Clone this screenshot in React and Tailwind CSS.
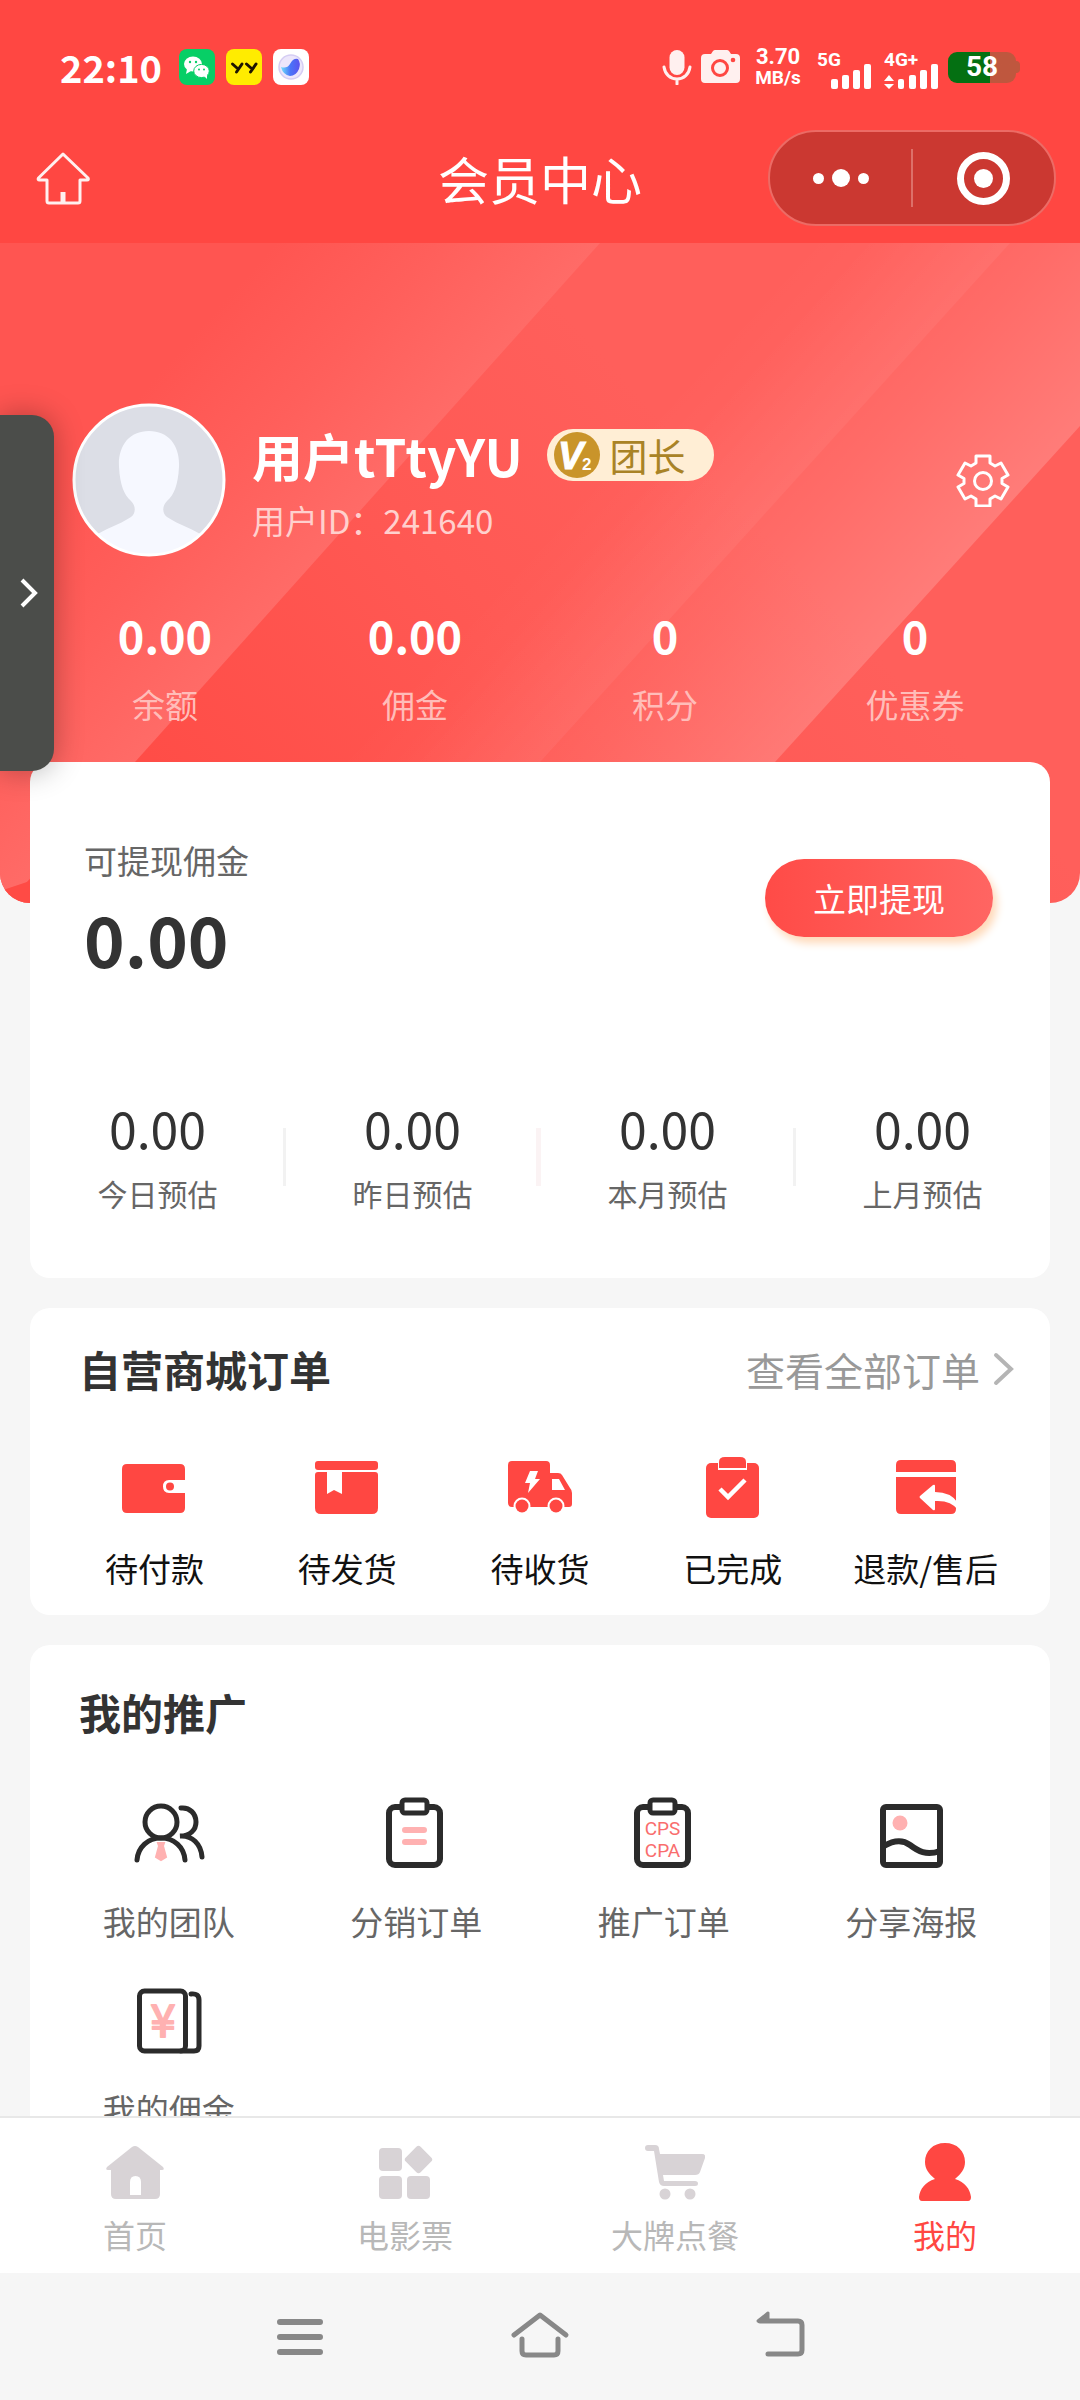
const StatusBar = () => (
  <div className="flex items-center justify-between px-[60px] pt-1 h-[130px] text-white">
    <div className="flex items-center gap-[11px]">
      <span className="text-[38px] leading-none font-bold mr-[6px]">22:10</span>
      <svg className="w-9 h-9" viewBox="0 0 36 36">
        <rect width="36" height="36" rx="8" fill="#07cf66" />
        <ellipse cx="14" cy="15" rx="9" ry="7.500" fill="#fff" />
        <path d="M8 20l-1 5 5-3z" fill="#fff" />
        <ellipse cx="22.500" cy="22" rx="7.800" ry="6.600" fill="#fff" stroke="#07cf66" strokeWidth="1" />
        <path d="M25 27l3 3 0-5z" fill="#fff" />
        <circle cx="11" cy="13" r="1.200" fill="#07cf66" />
        <circle cx="17" cy="13" r="1.200" fill="#07cf66" />
        <circle cx="20" cy="20.500" r="1" fill="#07cf66" />
        <circle cx="25" cy="20.500" r="1" fill="#07cf66" />
      </svg>
      <svg className="w-9 h-9" viewBox="0 0 36 36">
        <rect width="36" height="36" rx="8" fill="#ffec00" />
        <g fill="none" stroke="#1d1500" strokeWidth="3" strokeLinecap="round">
          <path d="M6.500 15l4.500 4M16 15l-5.500 8" />
          <path d="M20.500 15l4.500 4M30 15l-5.500 8" />
        </g>
      </svg>
      <svg className="w-9 h-9" viewBox="0 0 36 36">
        <defs>
          <linearGradient id="orb" x1="0" y1="0" x2="1" y2="0">
            <stop offset="0" stopColor="#6fe0fb" />
            <stop offset="0.500" stopColor="#4a74f8" />
            <stop offset="1" stopColor="#5b53ee" />
          </linearGradient>
        </defs>
        <rect width="36" height="36" rx="8" fill="#fff" />
        <circle cx="18" cy="18" r="12" fill="#ece6fb" stroke="#d5cdf3" strokeWidth="1.500" />
        <path d="M8 18q6 2 9-3 3-6 8-5 3 4 1 10-3 7-9 7-7-1-9-9z" fill="url(#orb)" />
      </svg>
    </div>

    <div className="flex items-center font-['Roboto',sans-serif]">
      <svg className="w-[30px] h-9" viewBox="0 0 30 36" fill="none" stroke="#fff0ef" strokeWidth="3" strokeLinecap="round">
        <rect x="7.500" y="1" width="15" height="25" rx="7.500" fill="#fff0ef" stroke="none" />
        <path d="M2 18c1 7 6 12 13 12s12-5 13-12M15 30v5" />
      </svg>
      <svg className="w-10 h-9 ml-[9px]" viewBox="0 0 40 36">
        <path fill="#fff0ef" d="M4 5h6l2-3q1-1 2-1h12q1 0 2 1l2 3h5q4 0 4 4v21q0 4-4 4H4q-4 0-4-4V9q0-4 4-4z" />
        <circle cx="19" cy="19" r="7.500" fill="none" stroke="#ff4742" strokeWidth="3" />
        <circle cx="32" cy="11" r="2.300" fill="#ff4742" />
      </svg>
      <div className="ml-[13px] flex w-[48px] flex-col items-center font-bold">
        <span className="text-[22px] leading-[22px]">3.70</span>
        <span className="text-[19px] leading-[20px]">MB/s</span>
      </div>
      <svg className="w-[56px] h-[46px] ml-[15px]" viewBox="0 -8 56 46" fill="#fff">
        <text x="0" y="14" fontSize="19" fontWeight="700">5G</text>
        <rect x="14" y="27" width="7" height="10" rx="2" />
        <rect x="25" y="23" width="7" height="14" rx="2" />
        <rect x="36" y="18" width="7" height="19" rx="2" />
        <rect x="47" y="12" width="7" height="25" rx="2" />
      </svg>
      <svg className="w-[56px] h-[46px] ml-[11px]" viewBox="0 -8 56 46" fill="#fff">
        <text x="0" y="14" fontSize="19" fontWeight="700">4G+</text>
        <path d="M5 23l5 6H0zM5 37l5-5H0z" />
        <rect x="14" y="27" width="6" height="10" rx="2" />
        <rect x="25" y="23" width="7" height="14" rx="2" />
        <rect x="36" y="18" width="7" height="19" rx="2" />
        <rect x="47" y="12" width="7" height="25" rx="2" />
      </svg>
      <div className="ml-[8px] flex h-[31px] w-[68px] items-center justify-center rounded-[9px] bg-linear-to-r from-[#047012] from-62% to-[#bf573e] to-62% text-[28px] leading-none font-bold">
        58
      </div>
      <span className="h-3 w-1 rounded-r bg-[#bf573e]" />
    </div>
  </div>
);

const Header = () => (
  <header className="grid grid-cols-3 items-center pb-[17px] px-6 text-white">
    <button aria-label="首页" className="ml-[12px] justify-self-start">
      <svg className="w-[54px] h-[54px]" viewBox="0 0 54 54" fill="none" stroke="#fff0ef" strokeWidth="3" strokeLinejoin="round">
        <path d="M27 3L2.500 27q-1 2 1 2H11v21q0 2 2 2h29q2 0 2-2V29h7q2 0 1-2z" />
        <path d="M27 41v10" strokeWidth="5" />
      </svg>
    </button>
    <h1 className="text-center text-[51px] leading-[62px]">会员中心</h1>
    <div className="justify-self-end flex h-24 w-[288px] items-center rounded-full border-2 border-[#ec6b65] bg-[#cb3831]">
      <button aria-label="更多" className="flex flex-1 items-center justify-center gap-2">
        <span className="size-[11px] rounded-full bg-white" />
        <span className="size-[18px] rounded-full bg-white" />
        <span className="size-[11px] rounded-full bg-white" />
      </button>
      <span className="h-[58px] w-[2px] bg-[#dd7069]" />
      <button aria-label="关闭" className="flex flex-1 items-center justify-center">
        <span className="flex size-[53px] items-center justify-center rounded-full border-[7px] border-white">
          <span className="size-[19px] rounded-full bg-white" />
        </span>
      </button>
    </div>
  </header>
);

const BannerArt = () => (
  <svg className="absolute inset-0 h-full w-full" viewBox="0 0 1080 660" preserveAspectRatio="none">
    <defs>
      <linearGradient id="base" gradientUnits="userSpaceOnUse" x1="150" y1="560" x2="620" y2="130">
        <stop offset="0" stopColor="#ff4c46" />
        <stop offset="0.600" stopColor="#ff5954" />
        <stop offset="1" stopColor="#ff5f5b" />
      </linearGradient>
      <linearGradient id="rayA" gradientUnits="userSpaceOnUse" x1="370" y1="257" x2="190" y2="96">
        <stop offset="0" stopColor="#ff6b67" />
        <stop offset="0.500" stopColor="#ff5f5b" />
        <stop offset="1" stopColor="#ff5551" />
      </linearGradient>
      <linearGradient id="rayB" gradientUnits="userSpaceOnUse" x1="700" y1="340" x2="590" y2="240">
        <stop offset="0" stopColor="#fff" stopOpacity="0.050" />
        <stop offset="1" stopColor="#fff" stopOpacity="0" />
      </linearGradient>
      <linearGradient id="rayC" gradientUnits="userSpaceOnUse" x1="930" y1="348" x2="720" y2="160">
        <stop offset="0" stopColor="#fff" stopOpacity="0.180" />
        <stop offset="0.500" stopColor="#fff" stopOpacity="0.080" />
        <stop offset="1" stopColor="#fff" stopOpacity="0" />
      </linearGradient>
    </defs>
    <rect width="1080" height="660" fill="url(#base)" />
    <path d="M0 0H600L135 519 8 660H0z" fill="url(#rayA)" />
    <path d="M0 648L30 638V660H0z" fill="#ff4b45" />
    <path d="M600 0H1010L540 519H135z" fill="url(#rayB)" />
    <path d="M600 0H1080V183L775 519H300z" fill="url(#rayC)" />
  </svg>
);

const accountStats = [
  { label: '余额', value: '0.00' },
  { label: '佣金', value: '0.00' },
  { label: '积分', value: '0' },
  { label: '优惠券', value: '0' },
];

const ProfileBanner = () => (
  <section className="relative overflow-hidden rounded-b-[30px] px-10 pt-40 pb-[176px] text-white">
    <BannerArt />
    <div className="relative flex items-center pl-8 pr-[30px]">
      <svg className="size-[154px] shrink-0" viewBox="0 0 154 154">
        <clipPath id="face"><circle cx="77" cy="77" r="75" /></clipPath>
        <circle cx="77" cy="77" r="75" fill="#dcdee6" />
        <g clipPath="url(#face)" fill="#f6f8ff">
          <path d="M77 28c-20 0-31 15-30 36 1 18 5 28 12 34 5 5 5 12 0 16-12 8-27 12-38 20v20h112v-20c-11-8-26-12-38-20-5-4-5-11 0-16 7-6 11-16 12-34 1-21-10-36-30-36z" />
        </g>
        <circle cx="77" cy="77" r="75" fill="none" stroke="#fff" strokeWidth="3" />
      </svg>
      <div className="ml-[26px] flex-1 pt-[6px]">
        <div className="flex items-center gap-6">
          <span className="text-[51px] leading-[64px] font-bold">用户tTtyYU</span>
          <span className="flex h-[52px] items-center gap-[10px] rounded-full bg-[#ffeed5] pl-[7px] pr-[28px] text-[38px] leading-none text-[#a98326]">
            <svg className="size-[46px]" viewBox="0 0 46 46">
              <circle cx="23" cy="23" r="23" fill="#c9942a" />
              <text x="4" y="37" fontSize="38" fontWeight="700" fontStyle="italic" fill="#fff" stroke="#fff" fontFamily="Liberation Sans">V</text>
              <text x="28" y="38" fontSize="17" fontWeight="700" fill="#fff" fontFamily="Liberation Sans">2</text>
            </svg>
            团长
          </span>
        </div>
        <p className="mt-[10px] text-[33px] leading-[46px] text-[#ffd0cd]">用户ID：241640</p>
      </div>
      <button aria-label="设置">
        <svg className="size-[54px]" viewBox="0 0 54 54" fill="none" stroke="#fff" strokeWidth="3" strokeLinejoin="round">
          <path d="M20 3h14v7l5 3 6-3 7 12-6 3.500v5l6 3.500-7 12-6-3-5 3v7H20v-7l-5-3-6 3-7-12 6-3.500v-5L2 22l7-12 6 3 5-3z" />
          <circle cx="27" cy="28" r="8.500" />
        </svg>
      </button>
    </div>
    <dl className="relative mt-[45px] grid grid-cols-4 text-center">
      {accountStats.map((s) => (
        <div key={s.label} className="flex flex-col-reverse gap-[13px]">
          <dt className="text-[33px] leading-[46px] text-[#ffbdb9]">{s.label}</dt>
          <dd className="text-[45px] leading-[66px] font-bold">{s.value}</dd>
        </div>
      ))}
    </dl>
  </section>
);

const estimates = [
  { label: '今日预估', divider: 'w-[3px] bg-[#f2f2f2]' },
  { label: '昨日预估', divider: 'w-[5px] bg-[#fbf3f4]' },
  { label: '本月预估', divider: 'w-[3px] bg-[#f2f2f2]' },
  { label: '上月预估' },
];

const CommissionCard = () => (
  <section className="rounded-[20px] bg-white pt-[73px] pb-[63px]">
    <div className="flex items-center justify-between pl-[54px] pr-[57px]">
      <div>
        <p className="text-[33px] leading-[50px] text-[#666]">可提现佣金</p>
        <p className="text-[69px] leading-[106px] font-bold text-[#333]">0.00</p>
      </div>
      <button className="mb-[30px] h-[78px] w-[228px] rounded-full bg-linear-to-r from-[#ff4b47] to-[#ff6562] text-[33px] leading-none text-white shadow-[4px_6px_8px_#ffd9b8]">
        立即提现
      </button>
    </div>
    <dl className="mt-[99px] grid grid-cols-4 text-center">
      {estimates.map(({ label, divider }) => (
        <div key={label} className="relative flex flex-col-reverse gap-[7px]">
          <dt className="text-[30px] leading-[44px] text-[#666]">{label}</dt>
          <dd className="text-[50px] leading-[74px] text-[#333]">0.00</dd>
          {divider && <span className={`absolute -right-px top-[38px] h-[58px] ${divider}`} />}
        </div>
      ))}
    </dl>
  </section>
);

const WalletIcon = () => (
  <svg className="size-16" viewBox="0 0 64 64" fill="#ff4742">
    <path d="M4 8h54q5 0 5 5v11H47q-6 0-6 6.500t6 6.500h16v15q0 5-5 5H5q-5 0-5-5V13q0-5 5-5z" />
    <circle cx="48" cy="30.500" r="4" />
  </svg>
);

const BoxIcon = () => (
  <svg className="size-16" viewBox="0 0 64 64" fill="#ff4742">
    <rect x="0" y="5" width="63" height="9" rx="3" />
    <path d="M3 16h9v22l7-4 8 4V16h33q3 0 3 3v33q0 6-6 6H6q-6 0-6-6V19q0-3 3-3z" />
  </svg>
);

const TruckIcon = () => (
  <svg className="size-16" viewBox="0 0 64 64" fill="#ff4742">
    <path d="M4 5h34q4 0 4 4v8h8q3 0 4 2l8 13q2 2 2 5v11q0 3-3 3H4q-4 0-4-4V9q0-4 4-4z" />
    <path d="M44 23h7l6 11H44zM22 15h8l-3 8h5L20 37l2-10h-5z" fill="#fff" />
    <circle cx="14" cy="50" r="8.500" fill="#fff" />
    <circle cx="48" cy="50" r="8.500" fill="#fff" />
    <circle cx="14" cy="50" r="6.500" />
    <circle cx="48" cy="50" r="6.500" />
  </svg>
);

const DoneIcon = () => (
  <svg className="size-16" viewBox="0 0 64 64" fill="#ff4742">
    <rect x="5" y="7" width="53" height="55" rx="5" />
    <rect x="17" y="3" width="29" height="11" fill="#fff" />
    <path d="M18 12V6q0-5 6-5h15q6 0 6 5v6z" />
    <path d="M19 33l8 8 17-17" fill="none" stroke="#fff" strokeWidth="4.500" />
  </svg>
);

const RefundIcon = () => (
  <svg className="size-16" viewBox="0 0 64 64" fill="#ff4742">
    <path d="M2 16V9q0-5 5-5h50q5 0 5 5v7zM2 21h60v32q0 5-5 5H7q-5 0-5-5z" />
    <path d="M26 42q-1-1 0-2l13-11q2-1 2 1v6q16 0 23 11v7q-7-10-23-9v8q0 2-2 1z" fill="#fff" />
  </svg>
);

const orderLinks = [
  { label: '待付款', icon: WalletIcon },
  { label: '待发货', icon: BoxIcon },
  { label: '待收货', icon: TruckIcon },
  { label: '已完成', icon: DoneIcon },
  { label: '退款/售后', icon: RefundIcon },
];

const OrdersCard = () => (
  <section className="rounded-[20px] bg-white pt-[30px] pb-6">
    <div className="flex items-center justify-between pl-[49px] pr-8">
      <h2 className="text-[42px] leading-[62px] font-bold text-[#333]">自营商城订单</h2>
      <a href="#orders" className="flex items-center gap-1 text-[39px] leading-[62px] text-[#999]">
        查看全部订单
        <svg className="size-[34px]" viewBox="0 0 34 34" fill="none" stroke="#b5b5b5" strokeWidth="4" strokeLinecap="round">
          <path d="M12 3l15 14-15 14" />
        </svg>
      </a>
    </div>
    <div className="mt-[56px] grid grid-cols-5 px-7">
      {orderLinks.map(({ label, icon: Icon }) => (
        <a key={label} href="#orders" className="flex flex-col items-center gap-[25px] text-[33px] leading-[46px] text-[#111]">
          <Icon />
          {label}
        </a>
      ))}
    </div>
  </section>
);

const TeamIcon = () => (
  <svg className="size-[72px]" viewBox="0 0 72 72" fill="none" stroke="#2b2b2b" strokeWidth="5" strokeLinecap="round">
    <circle cx="28" cy="25" r="16" />
    <path d="M4 63c1-13 11-22 24-22s23 9 24 22M48 11c9-1 15 6 15 14s-6 14-16 14c12-1 21 8 22 21" />
    <path d="M25 46h6l-1 3 3 11-5 3-5-3 3-11z" fill="#ffb1b1" stroke="#ffb1b1" strokeWidth="2" />
  </svg>
);

const Clipboard = ({ children }) => (
  <svg className="size-[72px]" viewBox="0 0 72 72" fill="none" stroke="#2b2b2b" strokeWidth="6" strokeLinecap="round">
    <rect x="9" y="10" width="51" height="58" rx="6" />
    <rect x="22" y="3" width="25" height="13" rx="3" fill="#fff" strokeWidth="5" />
    {children}
  </svg>
);

const SalesIcon = () => (
  <Clipboard>
    <path d="M25 33h19M25 45h19" stroke="#ffb1b1" />
  </Clipboard>
);

const PromoIcon = () => (
  <Clipboard>
    <g fill="#f96d6d" stroke="none" fontSize="19" fontFamily="Roboto" textAnchor="middle">
      <text x="34.500" y="38">CPS</text>
      <text x="34.500" y="60">CPA</text>
    </g>
  </Clipboard>
);

const PosterIcon = () => (
  <svg className="size-[72px]" viewBox="0 0 72 72" fill="none" stroke="#2b2b2b" strokeWidth="6">
    <rect x="8" y="10" width="57" height="58" rx="3" />
    <path d="M9 49c10-6 18-7 26-1s16 11 30 6" />
    <circle cx="25" cy="26" r="7.500" fill="#ffb1b1" stroke="none" />
  </svg>
);

const MoneyIcon = () => (
  <svg className="size-[72px]" viewBox="0 0 72 72" fill="none" stroke="#2b2b2b" strokeWidth="5" strokeLinecap="round">
    <rect x="6.500" y="6" width="46" height="60" rx="5" />
    <path d="M58 9q8-1 8 6v46q0 5-5 5H48" />
    <text x="30" y="52" textAnchor="middle" fontSize="45" fill="#ffb1b1" stroke="#ffb1b1" strokeWidth="2" strokeLinejoin="round">¥</text>
  </svg>
);

const promoLinks = [
  { label: '我的团队', icon: TeamIcon },
  { label: '分销订单', icon: SalesIcon },
  { label: '推广订单', icon: PromoIcon },
  { label: '分享海报', icon: PosterIcon },
  { label: '我的佣金', icon: MoneyIcon },
];

const PromotionCard = () => (
  <section className="rounded-[20px] bg-white pt-[36px] pb-10">
    <h2 className="pl-[49px] text-[42px] leading-[62px] font-bold text-[#333]">我的推广</h2>
    <div className="mt-[54px] grid grid-cols-4 gap-y-[41px] px-[15px]">
      {promoLinks.map(({ label, icon: Icon }) => (
        <a key={label} href="#promo" className="flex flex-col items-center gap-[29px] text-[33px] leading-[46px] text-[#666]">
          <Icon />
          {label}
        </a>
      ))}
    </div>
  </section>
);

const HomeTab = () => (
  <svg className="size-[60px]" viewBox="0 0 60 60" fill="#d8d3d6">
    <path fillRule="evenodd" d="M27 5q3-2 6 0l25 20q2 3-1 3h-2v24q0 5-5 5H11q-5 0-5-5V28H3q-3 0-1-3zM25 53h11V40q0-6-5.500-6T25 40z" />
  </svg>
);

const TicketTab = () => (
  <svg className="size-[60px]" viewBox="0 0 60 60" fill="#d8d3d6">
    <rect x="4" y="6" width="23" height="23" rx="4" />
    <rect x="4" y="34" width="23" height="23" rx="4" />
    <rect x="32" y="34" width="23" height="23" rx="4" />
    <rect x="33" y="7" width="21" height="21" rx="3" transform="rotate(45 43.500 17.500)" />
  </svg>
);

const CartTab = () => (
  <svg className="size-[60px]" viewBox="0 0 60 60" fill="#d8d3d6">
    <path d="M3 3h7q4 0 4 4l1 5h42q4 0 3 4l-5 14q-1 3-5 3H18l1 6h31q3 0 3 2.500T50 44H19q-4 0-5-4L9 9H3Q0 9 0 6t3-3z" />
    <circle cx="20" cy="52" r="5.500" />
    <circle cx="45" cy="52" r="5.500" />
  </svg>
);

const MineTab = () => (
  <svg className="size-[60px]" viewBox="0 0 60 60" fill="#ff4742">
    <path d="M30 1c12 0 20 8 20 19 0 7-4 12-10 17 10 3 15 10 16 18q0 4-3 4H7q-3 0-3-4c1-8 6-15 16-18-6-5-10-10-10-17C10 9 18 1 30 1z" />
  </svg>
);

const tabs = [
  { label: '首页', icon: HomeTab },
  { label: '电影票', icon: TicketTab },
  { label: '大牌点餐', icon: CartTab },
  { label: '我的', icon: MineTab, active: true },
];

const TabBar = () => (
  <nav className="grid shrink-0 grid-cols-4 border-t-2 border-[#e8e8e8] bg-white pt-[24px] pb-4">
    {tabs.map(({ label, icon: Icon, active }) => (
      <a
        key={label}
        href="#tab"
        className={`flex flex-col items-center gap-[9px] text-[32px] leading-[46px] ${active ? 'text-[#ff4742]' : 'text-[#b8b8b8]'}`}
      >
        <Icon />
        {label}
      </a>
    ))}
  </nav>
);

const SystemNav = () => (
  <div className="flex h-[127px] shrink-0 items-center justify-center gap-[180px] bg-[#f6f6f6]">
    <button aria-label="任务">
      <svg className="size-[60px]" viewBox="0 0 60 60" stroke="#888" strokeWidth="6" strokeLinecap="round">
        <path d="M10 15h40M10 30h40M10 45h40" />
      </svg>
    </button>
    <button aria-label="主屏幕">
      <svg className="size-[60px]" viewBox="0 0 60 60" fill="none" stroke="#888" strokeWidth="5" strokeLinecap="round" strokeLinejoin="round">
        <path d="M4 28L30 8l26 20M12 32v12q0 4 4 4h28q4 0 4-4V32" />
      </svg>
    </button>
    <button aria-label="返回">
      <svg className="size-[60px]" viewBox="0 0 60 60" fill="none" stroke="#888" strokeWidth="5" strokeLinecap="round" strokeLinejoin="round">
        <path d="M18 47h30q4 0 4-4V18q0-4-4-4H10" />
        <path d="M8 14l10-8v8z" fill="#888" strokeWidth="3" />
      </svg>
    </button>
  </div>
);

export default function App() {
  return (
    <div className="relative flex h-screen flex-col bg-[#f6f6f6] font-['Noto_Sans_CJK_SC',sans-serif]">
      <div className="shrink-0 bg-[#ff4742]">
        <StatusBar />
        <Header />
      </div>
      <main className="min-h-0 flex-1 overflow-y-auto [scrollbar-width:none]">
        <ProfileBanner />
        <div className="relative -mt-[141px] flex flex-col gap-[30px] px-[30px]">
          <CommissionCard />
          <OrdersCard />
          <PromotionCard />
        </div>
      </main>
      <TabBar />
      <SystemNav />
      {/* floating drawer handle */}
      <button
        aria-label="展开"
        className="absolute left-0 top-[415px] flex h-[356px] w-[54px] items-center justify-center rounded-r-[22px] bg-[#4b4d4a] shadow-[0_0_30px_rgba(0,0,0,0.3)]"
      >
        <svg className="size-8" viewBox="0 0 32 32" fill="none" stroke="#fff" strokeWidth="4">
          <path d="M11 3l13 13-13 13" />
        </svg>
      </button>
    </div>
  );
}
